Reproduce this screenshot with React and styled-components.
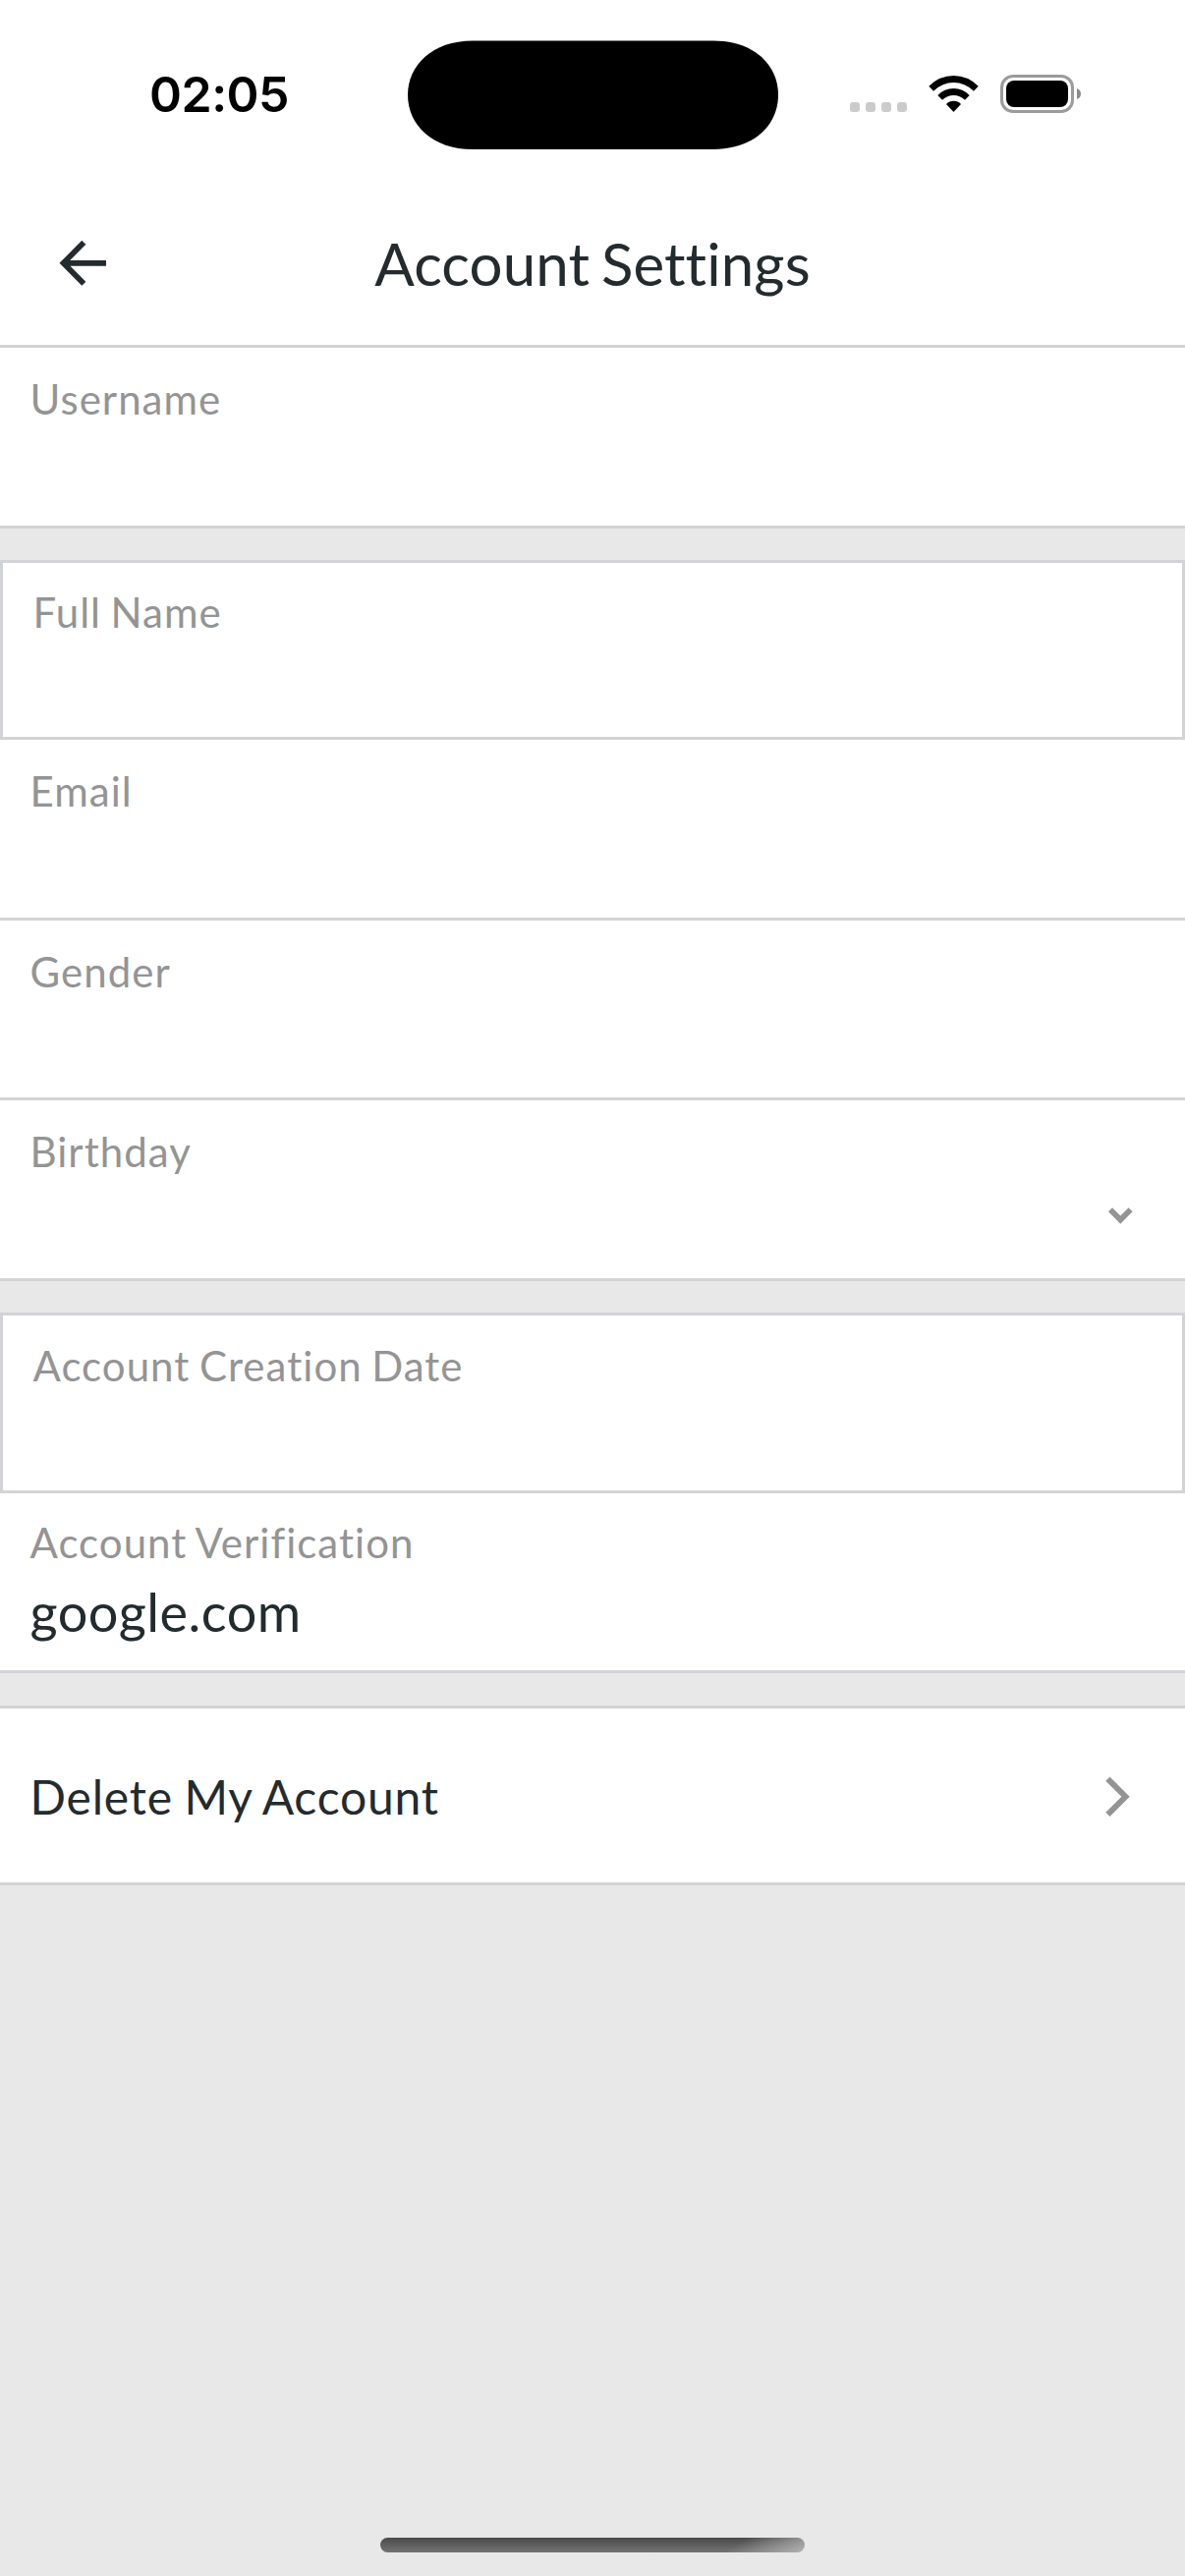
import React from "react";
import styled, { createGlobalStyle } from "styled-components";

const GlobalStyle = createGlobalStyle`
  *, *::before, *::after { box-sizing: border-box; }
  body { margin: 0; background: #e8e8e8; }
`;

const Screen = styled.main`
  width: 1206px;
  height: 2622px;
  display: flex;
  flex-direction: column;
  overflow: hidden;
  background: #e8e8e8;
  color: #232b2e;
  font-family: Lato, "Liberation Sans", sans-serif;
  font-variant-ligatures: none;
`;

const StatusBar = styled.div`
  height: 186px;
  flex: none;
  display: grid;
  grid-template-columns: 414px 378px 414px;
  background: #fff;
`;

const Clock = styled.time`
  padding: 65px 0 0 152px;
  font: 600 50px/62px Inter, sans-serif;
  letter-spacing: -0.5px;
  color: #000;
`;

const Island = styled.div`
  padding: 41px 0 0 0.5px;

  svg { display: block; }
`;

const Indicators = styled.div`
  display: flex;
  align-items: flex-start;
  padding: 76px 0 0 73px;
`;

const Header = styled.header`
  height: 168px;
  flex: none;
  display: grid;
  grid-template-columns: 168px 1fr 168px;
  background: #fff;
  border-bottom: 3px solid #d3d3d3;
`;

const BackButton = styled.button`
  display: flex;
  align-items: flex-start;
  padding: 57px 0 0 58px;
  border: 0;
  background: none;
  color: inherit;
`;

const Title = styled.h1`
  margin: 0;
  padding-top: 46px;
  text-align: center;
  font-size: 60px;
  line-height: 72px;
  font-weight: 400;
  letter-spacing: 0.12px;
  word-spacing: -3.7px;
`;

const Group = styled.section`
  flex: none;
  display: flex;
  flex-direction: column;
  margin-bottom: ${(p) => p.$gap || 0}px;
`;

const Row = styled.div`
  height: ${(p) => p.$height}px;
  display: flex;
  justify-content: space-between;
  padding: ${(p) => p.$top || 27}px 0 0 30.5px;
  background: #fff;
  border: 0 solid #d2d3d7;
  border-width: ${(p) => (p.$boxed ? "3px" : "0 0 3px")};
`;

const FieldText = styled.div`
  display: flex;
  flex-direction: column;
`;

const Label = styled.span`
  font-size: 42px;
  line-height: 51px;
  letter-spacing: 1.03px;
  word-spacing: -2.2px;
  color: #949494;
`;

const Value = styled.span`
  margin-top: 12px;
  font-size: 54px;
  line-height: 65px;
  letter-spacing: 0.5px;
`;

const ChevronDown = styled.svg`
  width: 25px;
  height: 17px;
  margin: 82px 53px 0 0;
`;

const ActionRow = styled.button`
  height: 183px;
  flex: none;
  display: flex;
  align-items: center;
  justify-content: space-between;
  padding: 2px 56px 0 30.5px;
  background: #fff;
  border: 0 solid #d3d3d3;
  border-width: 3px 0;
  color: inherit;
  font: 400 48px/58px Lato, sans-serif;
  font-variant-ligatures: none;
  letter-spacing: 0.82px;
  word-spacing: -1.5px;
`;

const HomeIndicator = styled.div`
  width: 432px;
  height: 15px;
  flex: none;
  margin: auto auto 24px 387px;
  border-radius: 8px;
  background:
    linear-gradient(147deg, rgba(185, 185, 185, 0) 82%, rgba(185, 185, 185, 0.9) 100%),
    linear-gradient(#4a4a4a, #737373);
`;

const personalFields = [
  { label: "Full Name", height: 183, top: 25, boxed: true },
  { label: "Email", height: 184, top: 27 },
  { label: "Gender", height: 183 },
  { label: "Birthday", height: 184, chevron: true },
];

const Field = ({ label, value, height, top, boxed, chevron }) => (
  <Row $height={height} $top={top} $boxed={boxed}>
    <FieldText>
      <Label>{label}</Label>
      {value && <Value>{value}</Value>}
    </FieldText>
    {chevron && (
      <ChevronDown viewBox="0 0 25 17" fill="#949494">
        <path d="M4 0.3L12.3 8.6L20.6 0.3L24.6 4.3L12.3 16.8L0 4.3Z" />
      </ChevronDown>
    )}
  </Row>
);

export default function App() {
  return (
    <Screen>
      <GlobalStyle />
      <StatusBar>
        <Clock>02:05</Clock>
        <Island>
          <svg width="377" height="111" viewBox="0 0 377 111">
            <path d="M66 0.5H311C352 0.5 377 25 377 55.7S352 111 311 111H66C25 111 0 86 0 55.7S25 0.5 66 0.5Z" />
          </svg>
        </Island>
        <Indicators>
          <svg width="235" height="40" viewBox="865 76 235 40">
            <g fill="#cbcbcb">
              {[865, 881, 897, 913].map((x) => (
                <rect key={x} x={x} y="104" width="10" height="10" rx="3.2" />
              ))}
            </g>
            <path d="M945.3 87.8Q956 77 970.5 77T995.7 87.8L991 92.7Q982 84 970.5 84T950 92.7Z" />
            <path d="M954.3 97Q961 90 970.5 90T986.7 97L982 101.8Q977 97 970.5 97T959 101.8Z" />
            <path d="M963 106Q966 102.8 970.5 102.8T978 106L970.5 114Z" />
            <rect x="1019.5" y="77.5" width="72" height="36" rx="11.5" fill="none" stroke="#9b9b9b" strokeWidth="3" />
            <rect x="1024" y="82" width="63" height="27" rx="8" />
            <path d="M1096 90Q1100 91.5 1100 95.5T1096 101Z" fill="#8b8b8b" />
          </svg>
        </Indicators>
      </StatusBar>
      <Header>
        <BackButton aria-label="Back">
          <svg width="52" height="50" viewBox="58 243 52 50" fill="none" stroke="currentColor" strokeWidth="5.7">
            <path d="M85.3 246.8L64.5 267.8L85.3 288.8M64 267.8H108" />
          </svg>
        </BackButton>
        <Title>Account Settings</Title>
      </Header>
      <Group $gap={32}>
        <Field label="Username" height={184} />
      </Group>
      <Group $gap={32}>
        {personalFields.map((f) => (
          <Field key={f.label} {...f} />
        ))}
      </Group>
      <Group $gap={33}>
        <Field label="Account Creation Date" height={184} top={26} boxed />
        <Field label="Account Verification" value="google.com" height={183} top={25} />
      </Group>
      <ActionRow>
        Delete My Account
        <svg width="25" height="42" viewBox="0 0 25 42" fill="#949494">
          <path d="M4.5 0.5L24.7 20.7L4.5 40.9L0.3 36.8L16.4 20.7L0.3 4.7Z" />
        </svg>
      </ActionRow>
      <HomeIndicator />
    </Screen>
  );
}
